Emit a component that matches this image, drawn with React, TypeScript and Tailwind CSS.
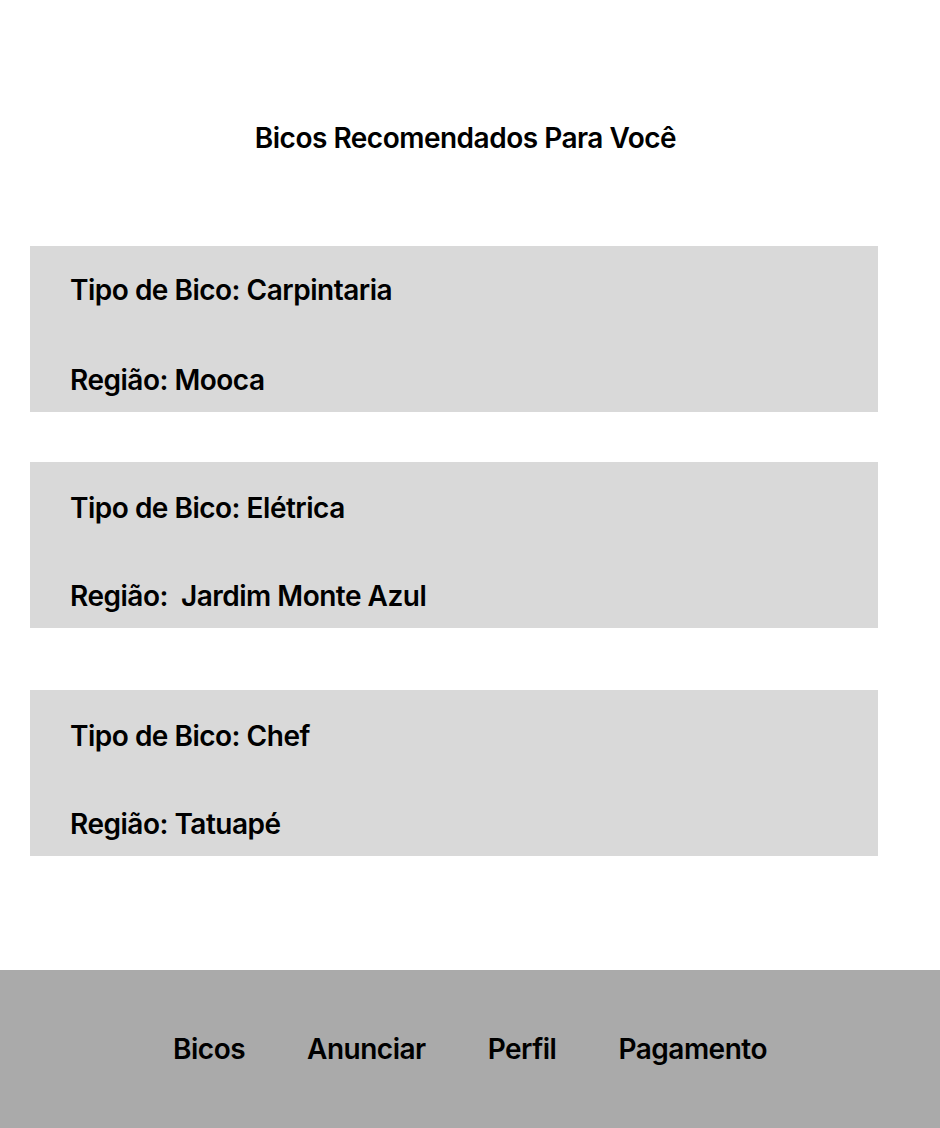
export default function App() {
  const bicos = [
    { tipo: "Carpintaria", regiao: "Mooca", mt: "mt-[91px]", pt: "pt-[27px]" },
    { tipo: "Elétrica", regiao: " Jardim Monte Azul", mt: "mt-[50px]", pt: "pt-[29px]" },
    { tipo: "Chef", regiao: "Tatuapé", mt: "mt-[62px]", pt: "pt-[29px]" },
  ];

  return (
    <div className="min-h-[1128px] bg-white font-['Inter',sans-serif] tracking-[-0.5px] text-black">
      {/* Conteúdo */}
      <main className="pt-[121px]">
        <h1 className="text-center text-[28px] font-semibold leading-[34px] pr-[9px]">
          Bicos Recomendados Para Você
        </h1>

        {bicos.map((b) => (
          <div
            key={b.tipo}
            className={`${b.mt} ${b.pt} ml-[30px] flex h-[166px] w-[848px] flex-col bg-[#d9d9d9] pl-[40px]`}
          >
            <p className="text-[28px] font-semibold leading-[34px] whitespace-pre">
              Tipo de Bico: {b.tipo}
            </p>
            <p className="mt-auto mb-[15px] text-[28px] font-semibold leading-[34px] whitespace-pre">
              Região: {b.regiao}
            </p>
          </div>
        ))}
      </main>

      {/* Navegação */}
      <nav className="mt-[114px] flex h-[158px] items-center justify-center gap-[62px] bg-[#aaaaaa]">
        <a className="text-[28px] font-semibold leading-[34px]">Bicos</a>
        <a className="text-[28px] font-semibold leading-[34px]">Anunciar</a>
        <a className="text-[28px] font-semibold leading-[34px]">Perfil</a>
        <a className="text-[28px] font-semibold leading-[34px]">Pagamento</a>
      </nav>
    </div>
  );
}
